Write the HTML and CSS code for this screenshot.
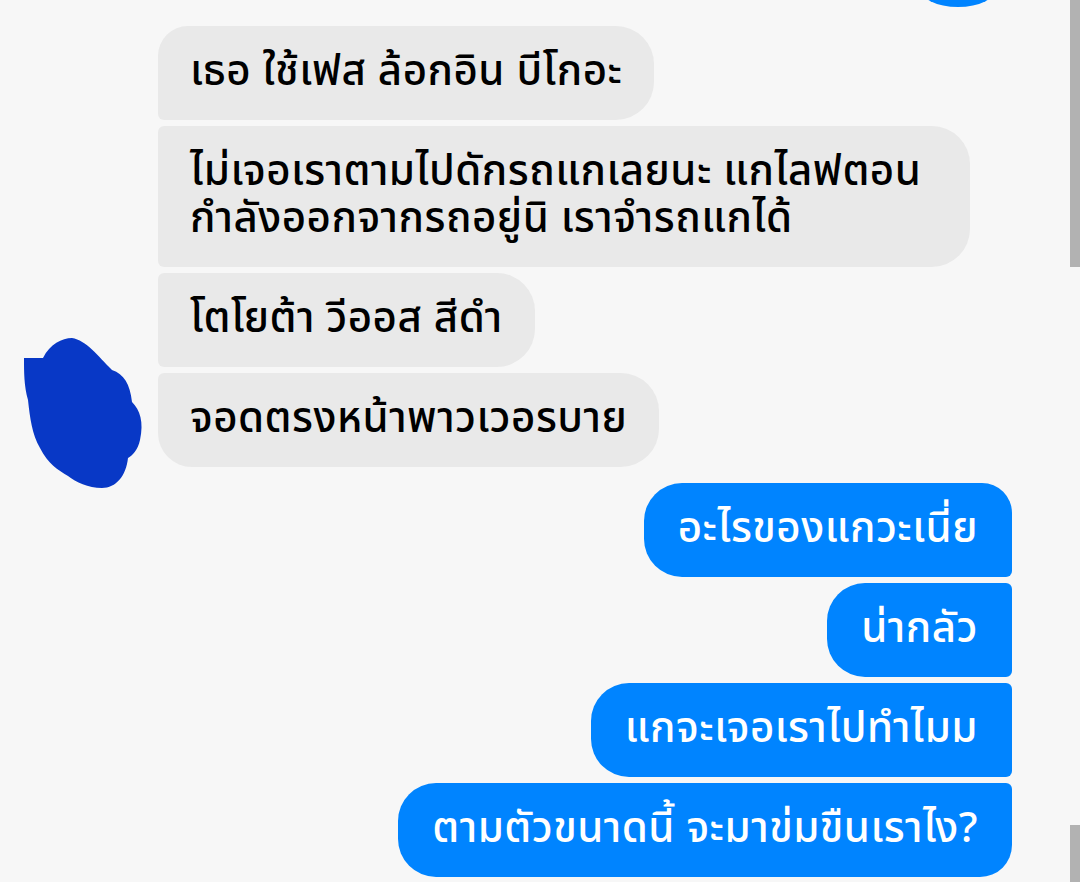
FILE: index.html
```html
<!DOCTYPE html>
<html lang="th">
<head>
    <meta charset="UTF-8">
    <meta name="viewport" content="width=device-width, initial-scale=1.0">
    <title>แชท</title>
    <link rel="stylesheet" href="styles.css">
</head>
<body>
    <div class="chat">
        <div class="prev-row">
            <div class="prev-blip"></div>
        </div>

        <div class="group theirs">
            <div class="avatar">
                <svg width="130" height="160" viewBox="0 0 130 160">
                    <path d="M4 22 L23 22 C30 8 42 2 52 2 C66 4 78 20 92 34 C104 38 110 48 112 66 C120 74 124 86 120 104 C118 114 112 120 108 122 C106 140 96 152 82 152 C68 152 56 146 48 140 C38 134 28 128 20 112 C12 98 10 82 8 64 C4 50 4 36 4 22 Z" fill="#0838c6"/>
                </svg>
            </div>
            <div class="bubbles">
                <div class="bubble first">เธอ ใช้เฟส ล้อกอิน บีโกอะ</div>
                <div class="bubble wide">ไม่เจอเราตามไปดักรถแกเลยนะ แกไลฟตอน<br>กำลังออกจากรถอยู่นิ เราจำรถแกได้</div>
                <div class="bubble">โตโยต้า วีออส สีดำ</div>
                <div class="bubble last">จอดตรงหน้าพาวเวอรบาย</div>
            </div>
        </div>

        <div class="group mine">
            <div class="bubbles">
                <div class="bubble first">อะไรของแกวะเนี่ย</div>
                <div class="bubble">น่ากลัว</div>
                <div class="bubble">แกจะเจอเราไปทำไมม</div>
                <div class="bubble last">ตามตัวขนาดนี้ จะมาข่มขืนเราไง?</div>
            </div>
        </div>
    </div>

    <div class="scroll-thumb top"></div>
    <div class="scroll-thumb bottom"></div>
</body>
</html>
```

FILE: styles.css
```css
* {
    box-sizing: border-box;
    margin: 0;
    padding: 0;
}

html, body {
    height: 100%;
}

body {
    font-family: "Noto Sans Thai", "Noto Sans", "DejaVu Sans", sans-serif;
    background-color: #f7f7f7;
    overflow: hidden;
    position: relative;
}

.chat {
    display: flex;
    flex-direction: column;
}

.prev-row {
    display: flex;
    justify-content: flex-end;
    padding-right: 83px;
    height: 26px;
}

.prev-blip {
    width: 78px;
    height: 40px;
    margin-top: -33px;
    border-radius: 50%;
    background-color: #0084ff;
}

.group {
    display: flex;
}

.group.theirs {
    align-items: flex-end;
}

.group.mine {
    justify-content: flex-end;
    padding-right: 68px;
    margin-top: 16px;
}

.avatar {
    width: 158px;
    display: flex;
    padding-left: 20px;
    margin-bottom: -29px;
}

.bubbles {
    display: flex;
    flex-direction: column;
    gap: 6px;
}

.theirs .bubbles {
    align-items: flex-start;
}

.mine .bubbles {
    align-items: flex-end;
}

.bubble {
    font-size: 42px;
    font-weight: 500;
    letter-spacing: 0.5px;
    line-height: 47px;
    padding: 23px 32px 24px 32px;
    white-space: nowrap;
}

.theirs .bubble {
    background-color: #e9e9e9;
    color: #000;
    border-radius: 6px 38px 38px 6px;
}

.theirs .bubble.first {
    border-top-left-radius: 30px;
}

.theirs .bubble.last {
    border-bottom-left-radius: 34px;
}

.theirs .bubble.wide {
    width: 812px;
}

.mine .bubble {
    background-color: #0084ff;
    color: #fff;
    padding: 23px 34px 24px 34px;
    border-radius: 38px 6px 6px 38px;
}

.mine .bubble.first {
    border-top-right-radius: 30px;
}

.mine .bubble.last {
    border-bottom-right-radius: 32px;
}

.scroll-thumb {
    position: absolute;
    right: 0;
    width: 10px;
    background-color: #b2b2b2;
}

.scroll-thumb.top {
    top: 0;
    height: 267px;
}

.scroll-thumb.bottom {
    top: 825px;
    height: 57px;
}
```
